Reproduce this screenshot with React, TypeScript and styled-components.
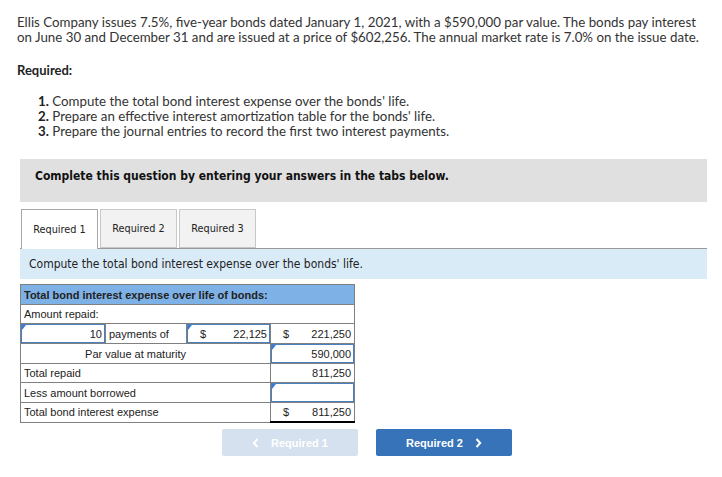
import React from "react";
import styled, { createGlobalStyle } from "styled-components";

const Global = createGlobalStyle`
  html, body { margin: 0; padding: 0; background: #fff; }
  body { font-family: Lato, "Liberation Sans", sans-serif; color: #333; }
`;

const Page = styled.div`
  width: 722px;
  padding: 15px 15px 0 17px;
  box-sizing: border-box;
`;

const Intro = styled.p`
  margin: 0;
  font-family: Lato, sans-serif;
  font-size: 13.3px;
  line-height: 15px;
  color: #333;
  white-space: nowrap;
`;

const ReqTitle = styled.div`
  margin-top: 18px;
  font-family: Lato, sans-serif;
  font-weight: 700;
  font-size: 13px;
  line-height: 15px;
  color: #222;
`;

const List = styled.ol`
  margin: 16px 0 0;
  padding: 0 0 0 21px;
  list-style: none;
  font-family: Lato, sans-serif;
  font-size: 13.3px;
  line-height: 15px;
  color: #333;
`;

const Num = styled.b`
  font-weight: 700;
  color: #222;
`;

const Instruction = styled.div`
  margin: 20px 0 0 3px;
  height: 43px;
  box-sizing: border-box;
  padding: 10px 15px 0;
  background: #e0e0e0;
  font-family: "DejaVu Sans", Verdana, sans-serif;
  font-stretch: condensed;
  font-weight: 700;
  font-size: 12px;
  color: #111;
`;

const Tabs = styled.div`
  display: flex;
  gap: 2px;
  margin: 7px 0 0 3px;
  padding-left: 1px;
  border-bottom: 1px solid #9a9a9a;
  height: 39px;
`;

const Tab = styled.div<{ $active?: boolean }>`
  width: 77px;
  height: ${(p) => (p.$active ? "40px" : "39px")};
  box-sizing: border-box;
  display: flex;
  align-items: center;
  justify-content: center;
  border: 1px solid ${(p) => (p.$active ? "#a8a8a8" : "#c8c8c8")};
  border-bottom: ${(p) => (p.$active ? "none" : "1px solid #c8c8c8")};
  background: ${(p) => (p.$active ? "#fff" : "#f2f2f2")};
  font-family: "DejaVu Sans", Verdana, sans-serif;
  font-stretch: condensed;
  font-size: 10.8px;
  color: #222;
`;

const Band = styled.div`
  margin-left: 3px;
  height: 30px;
  box-sizing: border-box;
  padding: 0 9px;
  display: flex;
  align-items: center;
  background: #daebf8;
  font-family: "DejaVu Sans", Verdana, sans-serif;
  font-stretch: condensed;
  font-size: 12px;
  color: #222;
`;

const Table = styled.table`
  margin: 5px 0 0 3px;
  width: 334px;
  border-collapse: collapse;
  font-family: "Liberation Sans", Arial, sans-serif;
  font-size: 11px;
  color: #222;
  table-layout: fixed;
`;

const HeadCell = styled.th`
  height: 19px;
  padding: 0 3px;
  text-align: left;
  font-weight: 700;
  background: #7eb1e5;
  border: 1px solid #808080;
  white-space: nowrap;
`;

const Cell = styled.td<{ $align?: string; $pad?: string; $thick?: boolean }>`
  height: 18px;
  padding: ${(p) => p.$pad || "0 3px"};
  text-align: ${(p) => p.$align || "left"};
  border: 1px solid #808080;
  ${(p) => (p.$thick ? "border-bottom: 2px solid #000;" : "")}
  white-space: nowrap;
  position: relative;
`;

const InputBox = styled.div<{ $dollar?: boolean }>`
  position: relative;
  height: 19px;
  box-sizing: border-box;
  border: 1px solid #4a7fc1;
  background: #fff;
  display: flex;
  align-items: center;
  justify-content: ${(p) => (p.$dollar ? "space-between" : "flex-end")};
  padding: 0 2px 0 12px;
  &::before {
    content: "";
    position: absolute;
    left: 0;
    top: 0;
    border-top: 5px solid #3c7bd6;
    border-right: 4px solid transparent;
  }
`;

const Money = styled.div`
  display: flex;
  justify-content: space-between;
  padding-left: 9px;
`;

const Buttons = styled.div`
  display: flex;
  justify-content: center;
  gap: 18px;
  margin: 6px 0 0 10px;
`;

const NavButton = styled.button<{ $primary?: boolean }>`
  width: 136px;
  height: 27px;
  border: none;
  border-radius: 2px;
  display: flex;
  align-items: center;
  justify-content: center;
  gap: 12px;
  background: ${(p) => (p.$primary ? "#3673b9" : "#d5e1ef")};
  color: #fff;
  font-family: "Liberation Sans", Arial, sans-serif;
  font-weight: 700;
  font-size: 11px;
  padding: 0;
`;

const Chevron = ({ dir }: { dir: "left" | "right" }) => (
  <svg width="7" height="10" viewBox="0 0 7 10">
    <path
      d={dir === "left" ? "M5.5 1 L1.8 5 L5.5 9" : "M1.5 1 L5.2 5 L1.5 9"}
      fill="none"
      stroke="#fff"
      strokeWidth="2"
    />
  </svg>
);

export default function App() {
  return (
    <>
      <Global />
      <Page>
        <Intro>
          Ellis Company issues 7.5%, five-year bonds dated January 1, 2021, with a $590,000 par value. The bonds pay interest
          <br />
          on June 30 and December 31 and are issued at a price of $602,256. The annual market rate is 7.0% on the issue date.
        </Intro>
        <ReqTitle>Required:</ReqTitle>
        <List>
          <li><Num>1.</Num> Compute the total bond interest expense over the bonds' life.</li>
          <li><Num>2.</Num> Prepare an effective interest amortization table for the bonds' life.</li>
          <li><Num>3.</Num> Prepare the journal entries to record the first two interest payments.</li>
        </List>
        <Instruction>Complete this question by entering your answers in the tabs below.</Instruction>
        <Tabs>
          <Tab $active>Required 1</Tab>
          <Tab>Required 2</Tab>
          <Tab>Required 3</Tab>
        </Tabs>
        <Band>Compute the total bond interest expense over the bonds' life.</Band>
        <Table>
          <colgroup>
            <col style={{ width: 85 }} />
            <col style={{ width: 81 }} />
            <col style={{ width: 84 }} />
            <col style={{ width: 84 }} />
          </colgroup>
          <thead>
            <tr>
              <HeadCell colSpan={4}>Total bond interest expense over life of bonds:</HeadCell>
            </tr>
          </thead>
          <tbody>
            <tr>
              <Cell colSpan={4}>Amount repaid:</Cell>
            </tr>
            <tr>
              <Cell $pad="0">
                <InputBox>10</InputBox>
              </Cell>
              <Cell>payments of</Cell>
              <Cell $pad="0">
                <InputBox $dollar>
                  <span>$</span>
                  <span>22,125</span>
                </InputBox>
              </Cell>
              <Cell>
                <Money>
                  <span>$</span>
                  <span>221,250</span>
                </Money>
              </Cell>
            </tr>
            <tr>
              <Cell colSpan={3} $align="center" $pad="0 20px 0 0">Par value at maturity</Cell>
              <Cell $pad="0">
                <InputBox>590,000</InputBox>
              </Cell>
            </tr>
            <tr>
              <Cell colSpan={3}>Total repaid</Cell>
              <Cell $align="right">811,250</Cell>
            </tr>
            <tr>
              <Cell colSpan={3}>Less amount borrowed</Cell>
              <Cell $pad="0">
                <InputBox />
              </Cell>
            </tr>
            <tr>
              <Cell colSpan={3}>Total bond interest expense</Cell>
              <Cell $thick>
                <Money>
                  <span>$</span>
                  <span>811,250</span>
                </Money>
              </Cell>
            </tr>
          </tbody>
        </Table>
        <Buttons>
          <NavButton>
            <Chevron dir="left" />
            <span>Required 1</span>
          </NavButton>
          <NavButton $primary>
            <span>Required 2</span>
            <Chevron dir="right" />
          </NavButton>
        </Buttons>
      </Page>
    </>
  );
}
